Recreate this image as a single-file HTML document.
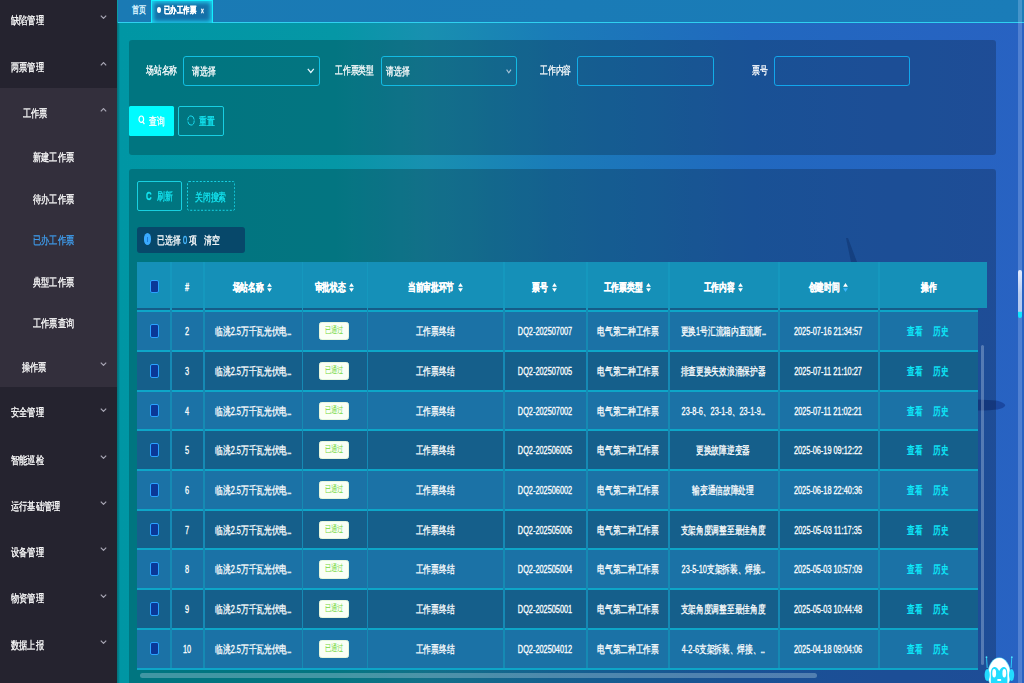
<!DOCTYPE html>
<html><head><meta charset="utf-8">
<style>
*{box-sizing:border-box;margin:0;padding:0}
html,body{width:1024px;height:683px;overflow:hidden;font-family:"Liberation Sans",sans-serif;color:#fff}
body{position:relative;background:#0a9ca4}
.a{position:absolute}
.t{position:absolute;white-space:nowrap;display:block;transform-origin:0 50%;transform:scaleX(.71);line-height:1;-webkit-text-stroke:.3px currentColor}
.c{position:absolute;white-space:nowrap;transform:translate(-50%,-50%) scaleX(.70);line-height:1;-webkit-text-stroke:.3px currentColor}
#side{left:0;top:0;width:117.2px;height:683px;background:#25232f}
#sub{left:0;top:88px;width:117.2px;height:299px;background:#332f3c}
.mi{font-size:11.4px;color:#fff;transform:scaleX(.745)}
.chev{position:absolute;width:5px;height:5px;border-right:1px solid #9a98a6;border-bottom:1px solid #9a98a6}
.dn{transform:rotate(45deg)}
.up{transform:rotate(-135deg)}
#main{left:117.5px;top:0;width:906.5px;height:683px;background:linear-gradient(90deg,#0096a4 0%,#0597a6 24%,#1890b0 34%,#1a7cb8 48%,#2168bf 70%,#2862c2 100%)}
#tabs{left:117.5px;top:0;width:906.5px;height:23px;background:linear-gradient(90deg,#1a7ab4,#1a7cb8);border-bottom:1.5px solid #2fd0f0}
.panel{position:absolute;background:rgba(0,0,0,.22);border-radius:3px}
.box{position:absolute;border:1px solid #17b4d8;border-radius:3px}
.lbl{font-size:10.5px;color:#fff}
.th{font-size:10.5px;font-weight:bold;color:#fff}
.td{font-size:10.5px;color:#fff}
.cb{position:absolute;width:9.2px;height:13.8px;background:#0a3898;border:1px solid #2aa2ff;border-radius:2px}
.row{position:absolute;left:137.3px;width:840.5px;border-top:2px solid #0ea6c8}
.vl{position:absolute;width:1.8px;background:#168ab4}
.tag{position:absolute;width:30px;height:18.4px;background:#fafff6;border:1px solid #e6f6dc;border-radius:2.5px}
.lnk{font-size:10.5px;color:#0cf0ff}
.sort{position:absolute;width:5px;height:9px}
</style></head><body>
<div id="main" class="a"></div>
<svg class="a" style="left:0;top:0" width="1024" height="683"><polygon points="846,238 848,238 857,262 851,262" fill="rgba(10,40,110,.32)"/><path d="M978 399.5 L996 400.5 C1003 402 1006 404.5 1005 406 C1003 409 996 410.5 978 410.5 Z" fill="rgba(10,40,120,.45)"/></svg>
<div id="tabs" class="a"></div>
<div class="a" style="left:117.2px;top:23px;width:3px;height:660px;background:linear-gradient(90deg,rgba(0,50,60,.45),rgba(0,50,60,0))"></div>
<div id="side" class="a"></div>
<div id="sub" class="a"></div>
<div class="t mi" style="left:11.3px;top:15.0px">缺陷管理</div>
<svg class="a" style="left:100.2px;top:15.2px" width="7" height="4" viewBox="0 0 6.6 4"><polyline points="0.6,0.6 3.3,3.3 6,0.6" fill="none" stroke="#a9a7b5" stroke-width="1.2"/></svg>
<div class="t mi" style="left:11.3px;top:61.5px">两票管理</div>
<svg class="a" style="left:100.2px;top:61.7px" width="7" height="4" viewBox="0 0 6.6 4"><polyline points="0.6,3.3 3.3,0.6 6,3.3" fill="none" stroke="#a9a7b5" stroke-width="1.2"/></svg>
<div class="t mi" style="left:22.7px;top:108.0px">工作票</div>
<svg class="a" style="left:100.2px;top:108.2px" width="7" height="4" viewBox="0 0 6.6 4"><polyline points="0.6,3.3 3.3,0.6 6,3.3" fill="none" stroke="#a9a7b5" stroke-width="1.2"/></svg>
<div class="t mi" style="left:33.1px;top:151.7px">新建工作票</div>
<div class="t mi" style="left:33.1px;top:193.6px">待办工作票</div>
<div class="t mi" style="left:33.1px;top:234.5px;color:#3fa0f2">已办工作票</div>
<div class="t mi" style="left:33.1px;top:276.5px">典型工作票</div>
<div class="t mi" style="left:33.1px;top:318.0px">工作票查询</div>
<div class="t mi" style="left:21.9px;top:361.5px">操作票</div>
<svg class="a" style="left:100.2px;top:361.7px" width="7" height="4" viewBox="0 0 6.6 4"><polyline points="0.6,0.6 3.3,3.3 6,0.6" fill="none" stroke="#a9a7b5" stroke-width="1.2"/></svg>
<div class="t mi" style="left:11.3px;top:407.4px">安全管理</div>
<svg class="a" style="left:100.2px;top:407.6px" width="7" height="4" viewBox="0 0 6.6 4"><polyline points="0.6,0.6 3.3,3.3 6,0.6" fill="none" stroke="#a9a7b5" stroke-width="1.2"/></svg>
<div class="t mi" style="left:11.3px;top:454.9px">智能巡检</div>
<svg class="a" style="left:100.2px;top:455.1px" width="7" height="4" viewBox="0 0 6.6 4"><polyline points="0.6,0.6 3.3,3.3 6,0.6" fill="none" stroke="#a9a7b5" stroke-width="1.2"/></svg>
<div class="t mi" style="left:11.3px;top:500.6px">运行基础管理</div>
<svg class="a" style="left:100.2px;top:500.8px" width="7" height="4" viewBox="0 0 6.6 4"><polyline points="0.6,0.6 3.3,3.3 6,0.6" fill="none" stroke="#a9a7b5" stroke-width="1.2"/></svg>
<div class="t mi" style="left:11.3px;top:546.7px">设备管理</div>
<svg class="a" style="left:100.2px;top:546.9px" width="7" height="4" viewBox="0 0 6.6 4"><polyline points="0.6,0.6 3.3,3.3 6,0.6" fill="none" stroke="#a9a7b5" stroke-width="1.2"/></svg>
<div class="t mi" style="left:11.3px;top:593.3px">物资管理</div>
<svg class="a" style="left:100.2px;top:593.5px" width="7" height="4" viewBox="0 0 6.6 4"><polyline points="0.6,0.6 3.3,3.3 6,0.6" fill="none" stroke="#a9a7b5" stroke-width="1.2"/></svg>
<div class="t mi" style="left:11.3px;top:639.9px">数据上报</div>
<svg class="a" style="left:100.2px;top:640.1px" width="7" height="4" viewBox="0 0 6.6 4"><polyline points="0.6,0.6 3.3,3.3 6,0.6" fill="none" stroke="#a9a7b5" stroke-width="1.2"/></svg>
<div class="c" style="left:138.5px;top:9.8px;font-size:9.8px;color:#dcf4ff;-webkit-text-stroke:.4px #dcf4ff">首页</div>
<div class="a" style="left:150.7px;top:0;width:62.2px;height:23px;border:1.5px solid #12f0ff;border-bottom:none;background:#1570a8;box-shadow:inset 0 0 4px 1.5px rgba(30,230,255,.85)"></div>
<div class="a" style="left:156.8px;top:7px;width:4px;height:6px;border-radius:50%;background:#fff"></div>
<div class="t" style="left:164.2px;top:4.9px;font-size:9.4px;font-weight:bold">已办工作票</div>
<div class="t" style="left:201px;top:6.8px;font-size:7px;color:#fff;font-weight:bold">x</div>
<div class="panel" style="left:129px;top:39.5px;width:866.5px;height:115.5px"></div>
<div class="t lbl" style="left:145.6px;top:65.3px">场站名称</div>
<div class="t lbl" style="left:335.2px;top:65.3px">工作票类型</div>
<div class="t lbl" style="left:540px;top:65.3px">工作内容</div>
<div class="t lbl" style="left:751.6px;top:65.3px">票号</div>
<div class="box" style="left:183px;top:56px;width:137px;height:30px;border-color:#12c0e2"></div>
<div class="t lbl" style="left:192px;top:65.8px">请选择</div>
<svg class="a" style="left:306.5px;top:68px" width="8" height="6" viewBox="0 0 8 6"><polyline points="0.8,0.8 3.8,4.5 6.8,0.8" fill="none" stroke="#e8f8ff" stroke-width="1.2"/></svg>
<div class="box" style="left:380.5px;top:56px;width:136.5px;height:30px;border-color:#12bbe4"></div>
<div class="t lbl" style="left:385.7px;top:65.8px">请选择</div>
<svg class="a" style="left:505.5px;top:68.5px" width="6" height="5" viewBox="0 0 6 5"><polyline points="0.6,0.6 2.8,3.8 5,0.6" fill="none" stroke="#a8c4d8" stroke-width="1.1"/></svg>
<div class="box" style="left:577px;top:56px;width:136.5px;height:30px;border-color:#12aee8"></div>
<div class="box" style="left:774.4px;top:56px;width:136.0px;height:30px;border-color:#12a6ec"></div>
<div class="a" style="left:128.6px;top:106px;width:45.3px;height:29.8px;background:#00fbff;border-radius:1.5px"></div>
<svg class="a" style="left:137.6px;top:115.2px" width="8" height="11" viewBox="0 0 8 11"><ellipse cx="3.3" cy="4.2" rx="2.3" ry="3.2" fill="none" stroke="#fff" stroke-width="1.2"/><line x1="4.8" y1="6.8" x2="6.4" y2="9.2" stroke="#fff" stroke-width="1.2"/></svg>
<div class="t" style="left:148.7px;top:115.8px;font-size:10.5px">查询</div>
<div class="box" style="left:178.4px;top:106px;width:45.4px;height:29.8px;border-color:#18cfe2;border-radius:2px"></div>
<svg class="a" style="left:187px;top:115px" width="8" height="11" viewBox="0 0 8 11"><ellipse cx="4" cy="5.5" rx="3.2" ry="4.6" fill="none" stroke="#1ad8ec" stroke-width="1" stroke-dasharray="11 1.2 11 1.2"/></svg>
<div class="t" style="left:198.5px;top:115.8px;font-size:10.5px;color:#14e6f2">重置</div>
<div class="panel" style="left:129px;top:169px;width:866.5px;height:520px"></div>
<div class="box" style="left:136.6px;top:181px;width:45.1px;height:29.7px;border-color:#18d0e0;border-radius:2px"></div>
<div class="t" style="left:146px;top:190.8px;font-size:11px;color:#14e6f2;font-weight:bold">C</div>
<div class="t" style="left:156.5px;top:190.5px;font-size:10.5px;color:#14e6f2">刷新</div>
<svg class="a" style="left:187.3px;top:181px" width="48.2" height="29.8" viewBox="0 0 48.2 29.8"><rect x="0.5" y="0.5" width="47.2" height="28.8" rx="1.5" fill="none" stroke="#16d2e4" stroke-width="1" stroke-dasharray="2 1.6"/></svg>
<div class="t" style="left:194.5px;top:191.5px;font-size:10.5px;color:#14e6f2">关闭搜索</div>
<div class="a" style="left:137px;top:227px;width:108.3px;height:25.7px;background:#07486a;border-radius:3px"></div>
<div class="a" style="left:143.9px;top:233.3px;width:7.6px;height:11.6px;border-radius:50%;background:#3aaaff"></div>
<div class="a" style="left:147.2px;top:236.5px;width:1px;height:5.5px;background:#1c7ad8"></div>
<div class="t" style="left:157px;top:234.5px;font-size:10.5px">已选择</div>
<div class="t" style="left:182.5px;top:234.5px;font-size:10.5px;color:#4ab8ff;-webkit-text-stroke:.5px #4ab8ff">0</div>
<div class="t" style="left:189.3px;top:234.5px;font-size:10.5px">项</div>
<div class="t" style="left:203.5px;top:234.5px;font-size:10.5px">清空</div>
<div class="a" style="left:137.3px;top:262.4px;width:849.7px;height:45.8px;background:#1590b8"></div>
<div class="a" style="left:137.3px;top:308.2px;width:840.5px;height:2.4px;background:#155c88"></div>
<div class="vl" style="left:170.1px;top:262.4px;height:48px;background:#1598be"></div>
<div class="vl" style="left:202.89999999999998px;top:262.4px;height:48px;background:#1598be"></div>
<div class="vl" style="left:301.5px;top:262.4px;height:48px;background:#1598be"></div>
<div class="vl" style="left:366.7px;top:262.4px;height:48px;background:#1598be"></div>
<div class="vl" style="left:503.0px;top:262.4px;height:48px;background:#1598be"></div>
<div class="vl" style="left:586.0px;top:262.4px;height:48px;background:#1598be"></div>
<div class="vl" style="left:668.3000000000001px;top:262.4px;height:48px;background:#1598be"></div>
<div class="vl" style="left:777.9000000000001px;top:262.4px;height:48px;background:#1598be"></div>
<div class="vl" style="left:877.9000000000001px;top:262.4px;height:48px;background:#1598be"></div>
<div class="cb" style="left:150.1px;top:279.5px"></div>
<div class="c th" style="left:186.8px;top:286.5px;transform:translate(-50%,-50%) scaleX(.70)">#</div>
<div class="c th" style="left:247.9px;top:286.5px;transform:translate(-50%,-50%) scaleX(.70)">场站名称</div>
<svg class="sort" style="left:267.3px;top:282.8px" viewBox="0 0 5 9"><polygon points="2.5,0 4.9,3.7 0.1,3.7" fill="#fff"/><polygon points="0.1,5.2 4.9,5.2 2.5,8.9" fill="#fff"/></svg>
<div class="c th" style="left:329.8px;top:286.5px;transform:translate(-50%,-50%) scaleX(.70)">审批状态</div>
<svg class="sort" style="left:349.2px;top:282.8px" viewBox="0 0 5 9"><polygon points="2.5,0 4.9,3.7 0.1,3.7" fill="#fff"/><polygon points="0.1,5.2 4.9,5.2 2.5,8.9" fill="#fff"/></svg>
<div class="c th" style="left:430.5px;top:286.5px;transform:translate(-50%,-50%) scaleX(.70)">当前审批环节</div>
<svg class="sort" style="left:457.6px;top:282.8px" viewBox="0 0 5 9"><polygon points="2.5,0 4.9,3.7 0.1,3.7" fill="#fff"/><polygon points="0.1,5.2 4.9,5.2 2.5,8.9" fill="#fff"/></svg>
<div class="c th" style="left:540.2px;top:286.5px;transform:translate(-50%,-50%) scaleX(.70)">票号</div>
<svg class="sort" style="left:551.9px;top:282.8px" viewBox="0 0 5 9"><polygon points="2.5,0 4.9,3.7 0.1,3.7" fill="#fff"/><polygon points="0.1,5.2 4.9,5.2 2.5,8.9" fill="#fff"/></svg>
<div class="c th" style="left:622.9px;top:286.5px;transform:translate(-50%,-50%) scaleX(.70)">工作票类型</div>
<svg class="sort" style="left:646.1px;top:282.8px" viewBox="0 0 5 9"><polygon points="2.5,0 4.9,3.7 0.1,3.7" fill="#fff"/><polygon points="0.1,5.2 4.9,5.2 2.5,8.9" fill="#fff"/></svg>
<div class="c th" style="left:718.8px;top:286.5px;transform:translate(-50%,-50%) scaleX(.70)">工作内容</div>
<svg class="sort" style="left:738.2px;top:282.8px" viewBox="0 0 5 9"><polygon points="2.5,0 4.9,3.7 0.1,3.7" fill="#fff"/><polygon points="0.1,5.2 4.9,5.2 2.5,8.9" fill="#fff"/></svg>
<div class="c th" style="left:823.6px;top:286.5px;transform:translate(-50%,-50%) scaleX(.70)">创建时间</div>
<svg class="sort" style="left:843.0px;top:282.8px" viewBox="0 0 5 9"><polygon points="2.5,0 4.9,3.7 0.1,3.7" fill="#fff"/><polygon points="0.1,5.2 4.9,5.2 2.5,8.9" fill="#3cb6ff"/></svg>
<div class="c th" style="left:928.5px;top:286.5px;transform:translate(-50%,-50%) scaleX(.70)">操作</div>
<div class="row" style="top:310.40px;height:41.18px;background:#1b72a6"></div>
<div class="vl" style="left:170.1px;top:310.40px;height:41.18px"></div>
<div class="vl" style="left:202.89999999999998px;top:310.40px;height:41.18px"></div>
<div class="vl" style="left:301.5px;top:310.40px;height:41.18px"></div>
<div class="vl" style="left:366.7px;top:310.40px;height:41.18px"></div>
<div class="vl" style="left:503.0px;top:310.40px;height:41.18px"></div>
<div class="vl" style="left:586.0px;top:310.40px;height:41.18px"></div>
<div class="vl" style="left:668.3000000000001px;top:310.40px;height:41.18px"></div>
<div class="vl" style="left:777.9000000000001px;top:310.40px;height:41.18px"></div>
<div class="vl" style="left:877.9000000000001px;top:310.40px;height:41.18px"></div>
<div class="cb" style="left:150.1px;top:324.2px"></div>
<div class="c td" style="left:186.8px;top:331.1px">2</div>
<div class="c td" style="left:252.5px;top:331.1px">临洮2.5万千瓦光伏电<span style="letter-spacing:-1.2px">...</span></div>
<div class="tag" style="left:319.4px;top:322.1px"></div>
<div class="c" style="left:334.4px;top:331.1px;font-size:9.2px;color:#72d83a;-webkit-text-stroke:0;transform:translate(-50%,-50%) scaleX(.70)">已通过</div>
<div class="c td" style="left:435.1px;top:331.1px">工作票终结</div>
<div class="c td" style="left:544.8px;top:331.1px">DQ2-202507007</div>
<div class="c td" style="left:627.5px;top:331.1px">电气第二种工作票</div>
<div class="c td" style="left:723.4px;top:331.1px">更换1号汇流箱内直流断<span style="letter-spacing:-1.2px">...</span></div>
<div class="c td" style="left:828.2px;top:331.1px">2025-07-16 21:34:57</div>
<div class="c lnk" style="left:914.5px;top:331.1px">查看</div>
<div class="c lnk" style="left:941.0px;top:331.1px">历史</div>
<div class="row" style="top:350.08px;height:41.18px;background:#155f8b"></div>
<div class="vl" style="left:170.1px;top:350.08px;height:41.18px"></div>
<div class="vl" style="left:202.89999999999998px;top:350.08px;height:41.18px"></div>
<div class="vl" style="left:301.5px;top:350.08px;height:41.18px"></div>
<div class="vl" style="left:366.7px;top:350.08px;height:41.18px"></div>
<div class="vl" style="left:503.0px;top:350.08px;height:41.18px"></div>
<div class="vl" style="left:586.0px;top:350.08px;height:41.18px"></div>
<div class="vl" style="left:668.3000000000001px;top:350.08px;height:41.18px"></div>
<div class="vl" style="left:777.9000000000001px;top:350.08px;height:41.18px"></div>
<div class="vl" style="left:877.9000000000001px;top:350.08px;height:41.18px"></div>
<div class="cb" style="left:150.1px;top:363.9px"></div>
<div class="c td" style="left:186.8px;top:370.8px">3</div>
<div class="c td" style="left:252.5px;top:370.8px">临洮2.5万千瓦光伏电<span style="letter-spacing:-1.2px">...</span></div>
<div class="tag" style="left:319.4px;top:361.8px"></div>
<div class="c" style="left:334.4px;top:370.8px;font-size:9.2px;color:#72d83a;-webkit-text-stroke:0;transform:translate(-50%,-50%) scaleX(.70)">已通过</div>
<div class="c td" style="left:435.1px;top:370.8px">工作票终结</div>
<div class="c td" style="left:544.8px;top:370.8px">DQ2-202507005</div>
<div class="c td" style="left:627.5px;top:370.8px">电气第二种工作票</div>
<div class="c td" style="left:723.4px;top:370.8px">排查更换失效浪涌保护器</div>
<div class="c td" style="left:828.2px;top:370.8px">2025-07-11 21:10:27</div>
<div class="c lnk" style="left:914.5px;top:370.8px">查看</div>
<div class="c lnk" style="left:941.0px;top:370.8px">历史</div>
<div class="row" style="top:389.76px;height:41.18px;background:#1b72a6"></div>
<div class="vl" style="left:170.1px;top:389.76px;height:41.18px"></div>
<div class="vl" style="left:202.89999999999998px;top:389.76px;height:41.18px"></div>
<div class="vl" style="left:301.5px;top:389.76px;height:41.18px"></div>
<div class="vl" style="left:366.7px;top:389.76px;height:41.18px"></div>
<div class="vl" style="left:503.0px;top:389.76px;height:41.18px"></div>
<div class="vl" style="left:586.0px;top:389.76px;height:41.18px"></div>
<div class="vl" style="left:668.3000000000001px;top:389.76px;height:41.18px"></div>
<div class="vl" style="left:777.9000000000001px;top:389.76px;height:41.18px"></div>
<div class="vl" style="left:877.9000000000001px;top:389.76px;height:41.18px"></div>
<div class="cb" style="left:150.1px;top:403.6px"></div>
<div class="c td" style="left:186.8px;top:410.5px">4</div>
<div class="c td" style="left:252.5px;top:410.5px">临洮2.5万千瓦光伏电<span style="letter-spacing:-1.2px">...</span></div>
<div class="tag" style="left:319.4px;top:401.5px"></div>
<div class="c" style="left:334.4px;top:410.5px;font-size:9.2px;color:#72d83a;-webkit-text-stroke:0;transform:translate(-50%,-50%) scaleX(.70)">已通过</div>
<div class="c td" style="left:435.1px;top:410.5px">工作票终结</div>
<div class="c td" style="left:544.8px;top:410.5px">DQ2-202507002</div>
<div class="c td" style="left:627.5px;top:410.5px">电气第二种工作票</div>
<div class="c td" style="left:723.4px;top:410.5px">23-8-6、23-1-8、23-1-9<span style="letter-spacing:-1.2px">...</span></div>
<div class="c td" style="left:828.2px;top:410.5px">2025-07-11 21:02:21</div>
<div class="c lnk" style="left:914.5px;top:410.5px">查看</div>
<div class="c lnk" style="left:941.0px;top:410.5px">历史</div>
<div class="row" style="top:429.44px;height:41.18px;background:#155f8b"></div>
<div class="vl" style="left:170.1px;top:429.44px;height:41.18px"></div>
<div class="vl" style="left:202.89999999999998px;top:429.44px;height:41.18px"></div>
<div class="vl" style="left:301.5px;top:429.44px;height:41.18px"></div>
<div class="vl" style="left:366.7px;top:429.44px;height:41.18px"></div>
<div class="vl" style="left:503.0px;top:429.44px;height:41.18px"></div>
<div class="vl" style="left:586.0px;top:429.44px;height:41.18px"></div>
<div class="vl" style="left:668.3000000000001px;top:429.44px;height:41.18px"></div>
<div class="vl" style="left:777.9000000000001px;top:429.44px;height:41.18px"></div>
<div class="vl" style="left:877.9000000000001px;top:429.44px;height:41.18px"></div>
<div class="cb" style="left:150.1px;top:443.2px"></div>
<div class="c td" style="left:186.8px;top:450.1px">5</div>
<div class="c td" style="left:252.5px;top:450.1px">临洮2.5万千瓦光伏电<span style="letter-spacing:-1.2px">...</span></div>
<div class="tag" style="left:319.4px;top:441.1px"></div>
<div class="c" style="left:334.4px;top:450.1px;font-size:9.2px;color:#72d83a;-webkit-text-stroke:0;transform:translate(-50%,-50%) scaleX(.70)">已通过</div>
<div class="c td" style="left:435.1px;top:450.1px">工作票终结</div>
<div class="c td" style="left:544.8px;top:450.1px">DQ2-202506005</div>
<div class="c td" style="left:627.5px;top:450.1px">电气第二种工作票</div>
<div class="c td" style="left:723.4px;top:450.1px">更换故障逆变器</div>
<div class="c td" style="left:828.2px;top:450.1px">2025-06-19 09:12:22</div>
<div class="c lnk" style="left:914.5px;top:450.1px">查看</div>
<div class="c lnk" style="left:941.0px;top:450.1px">历史</div>
<div class="row" style="top:469.12px;height:41.18px;background:#1b72a6"></div>
<div class="vl" style="left:170.1px;top:469.12px;height:41.18px"></div>
<div class="vl" style="left:202.89999999999998px;top:469.12px;height:41.18px"></div>
<div class="vl" style="left:301.5px;top:469.12px;height:41.18px"></div>
<div class="vl" style="left:366.7px;top:469.12px;height:41.18px"></div>
<div class="vl" style="left:503.0px;top:469.12px;height:41.18px"></div>
<div class="vl" style="left:586.0px;top:469.12px;height:41.18px"></div>
<div class="vl" style="left:668.3000000000001px;top:469.12px;height:41.18px"></div>
<div class="vl" style="left:777.9000000000001px;top:469.12px;height:41.18px"></div>
<div class="vl" style="left:877.9000000000001px;top:469.12px;height:41.18px"></div>
<div class="cb" style="left:150.1px;top:482.9px"></div>
<div class="c td" style="left:186.8px;top:489.8px">6</div>
<div class="c td" style="left:252.5px;top:489.8px">临洮2.5万千瓦光伏电<span style="letter-spacing:-1.2px">...</span></div>
<div class="tag" style="left:319.4px;top:480.8px"></div>
<div class="c" style="left:334.4px;top:489.8px;font-size:9.2px;color:#72d83a;-webkit-text-stroke:0;transform:translate(-50%,-50%) scaleX(.70)">已通过</div>
<div class="c td" style="left:435.1px;top:489.8px">工作票终结</div>
<div class="c td" style="left:544.8px;top:489.8px">DQ2-202506002</div>
<div class="c td" style="left:627.5px;top:489.8px">电气第二种工作票</div>
<div class="c td" style="left:723.4px;top:489.8px">输变通信故障处理</div>
<div class="c td" style="left:828.2px;top:489.8px">2025-06-18 22:40:36</div>
<div class="c lnk" style="left:914.5px;top:489.8px">查看</div>
<div class="c lnk" style="left:941.0px;top:489.8px">历史</div>
<div class="row" style="top:508.80px;height:41.18px;background:#155f8b"></div>
<div class="vl" style="left:170.1px;top:508.80px;height:41.18px"></div>
<div class="vl" style="left:202.89999999999998px;top:508.80px;height:41.18px"></div>
<div class="vl" style="left:301.5px;top:508.80px;height:41.18px"></div>
<div class="vl" style="left:366.7px;top:508.80px;height:41.18px"></div>
<div class="vl" style="left:503.0px;top:508.80px;height:41.18px"></div>
<div class="vl" style="left:586.0px;top:508.80px;height:41.18px"></div>
<div class="vl" style="left:668.3000000000001px;top:508.80px;height:41.18px"></div>
<div class="vl" style="left:777.9000000000001px;top:508.80px;height:41.18px"></div>
<div class="vl" style="left:877.9000000000001px;top:508.80px;height:41.18px"></div>
<div class="cb" style="left:150.1px;top:522.6px"></div>
<div class="c td" style="left:186.8px;top:529.5px">7</div>
<div class="c td" style="left:252.5px;top:529.5px">临洮2.5万千瓦光伏电<span style="letter-spacing:-1.2px">...</span></div>
<div class="tag" style="left:319.4px;top:520.5px"></div>
<div class="c" style="left:334.4px;top:529.5px;font-size:9.2px;color:#72d83a;-webkit-text-stroke:0;transform:translate(-50%,-50%) scaleX(.70)">已通过</div>
<div class="c td" style="left:435.1px;top:529.5px">工作票终结</div>
<div class="c td" style="left:544.8px;top:529.5px">DQ2-202505006</div>
<div class="c td" style="left:627.5px;top:529.5px">电气第二种工作票</div>
<div class="c td" style="left:723.4px;top:529.5px">支架角度调整至最佳角度</div>
<div class="c td" style="left:828.2px;top:529.5px">2025-05-03 11:17:35</div>
<div class="c lnk" style="left:914.5px;top:529.5px">查看</div>
<div class="c lnk" style="left:941.0px;top:529.5px">历史</div>
<div class="row" style="top:548.48px;height:41.18px;background:#1b72a6"></div>
<div class="vl" style="left:170.1px;top:548.48px;height:41.18px"></div>
<div class="vl" style="left:202.89999999999998px;top:548.48px;height:41.18px"></div>
<div class="vl" style="left:301.5px;top:548.48px;height:41.18px"></div>
<div class="vl" style="left:366.7px;top:548.48px;height:41.18px"></div>
<div class="vl" style="left:503.0px;top:548.48px;height:41.18px"></div>
<div class="vl" style="left:586.0px;top:548.48px;height:41.18px"></div>
<div class="vl" style="left:668.3000000000001px;top:548.48px;height:41.18px"></div>
<div class="vl" style="left:777.9000000000001px;top:548.48px;height:41.18px"></div>
<div class="vl" style="left:877.9000000000001px;top:548.48px;height:41.18px"></div>
<div class="cb" style="left:150.1px;top:562.3px"></div>
<div class="c td" style="left:186.8px;top:569.2px">8</div>
<div class="c td" style="left:252.5px;top:569.2px">临洮2.5万千瓦光伏电<span style="letter-spacing:-1.2px">...</span></div>
<div class="tag" style="left:319.4px;top:560.2px"></div>
<div class="c" style="left:334.4px;top:569.2px;font-size:9.2px;color:#72d83a;-webkit-text-stroke:0;transform:translate(-50%,-50%) scaleX(.70)">已通过</div>
<div class="c td" style="left:435.1px;top:569.2px">工作票终结</div>
<div class="c td" style="left:544.8px;top:569.2px">DQ2-202505004</div>
<div class="c td" style="left:627.5px;top:569.2px">电气第二种工作票</div>
<div class="c td" style="left:723.4px;top:569.2px">23-5-10支架拆装、焊接<span style="letter-spacing:-1.2px">...</span></div>
<div class="c td" style="left:828.2px;top:569.2px">2025-05-03 10:57:09</div>
<div class="c lnk" style="left:914.5px;top:569.2px">查看</div>
<div class="c lnk" style="left:941.0px;top:569.2px">历史</div>
<div class="row" style="top:588.16px;height:41.18px;background:#155f8b"></div>
<div class="vl" style="left:170.1px;top:588.16px;height:41.18px"></div>
<div class="vl" style="left:202.89999999999998px;top:588.16px;height:41.18px"></div>
<div class="vl" style="left:301.5px;top:588.16px;height:41.18px"></div>
<div class="vl" style="left:366.7px;top:588.16px;height:41.18px"></div>
<div class="vl" style="left:503.0px;top:588.16px;height:41.18px"></div>
<div class="vl" style="left:586.0px;top:588.16px;height:41.18px"></div>
<div class="vl" style="left:668.3000000000001px;top:588.16px;height:41.18px"></div>
<div class="vl" style="left:777.9000000000001px;top:588.16px;height:41.18px"></div>
<div class="vl" style="left:877.9000000000001px;top:588.16px;height:41.18px"></div>
<div class="cb" style="left:150.1px;top:602.0px"></div>
<div class="c td" style="left:186.8px;top:608.9px">9</div>
<div class="c td" style="left:252.5px;top:608.9px">临洮2.5万千瓦光伏电<span style="letter-spacing:-1.2px">...</span></div>
<div class="tag" style="left:319.4px;top:599.9px"></div>
<div class="c" style="left:334.4px;top:608.9px;font-size:9.2px;color:#72d83a;-webkit-text-stroke:0;transform:translate(-50%,-50%) scaleX(.70)">已通过</div>
<div class="c td" style="left:435.1px;top:608.9px">工作票终结</div>
<div class="c td" style="left:544.8px;top:608.9px">DQ2-202505001</div>
<div class="c td" style="left:627.5px;top:608.9px">电气第二种工作票</div>
<div class="c td" style="left:723.4px;top:608.9px">支架角度调整至最佳角度</div>
<div class="c td" style="left:828.2px;top:608.9px">2025-05-03 10:44:48</div>
<div class="c lnk" style="left:914.5px;top:608.9px">查看</div>
<div class="c lnk" style="left:941.0px;top:608.9px">历史</div>
<div class="row" style="top:627.84px;height:41.18px;background:#1b72a6"></div>
<div class="vl" style="left:170.1px;top:627.84px;height:41.18px"></div>
<div class="vl" style="left:202.89999999999998px;top:627.84px;height:41.18px"></div>
<div class="vl" style="left:301.5px;top:627.84px;height:41.18px"></div>
<div class="vl" style="left:366.7px;top:627.84px;height:41.18px"></div>
<div class="vl" style="left:503.0px;top:627.84px;height:41.18px"></div>
<div class="vl" style="left:586.0px;top:627.84px;height:41.18px"></div>
<div class="vl" style="left:668.3000000000001px;top:627.84px;height:41.18px"></div>
<div class="vl" style="left:777.9000000000001px;top:627.84px;height:41.18px"></div>
<div class="vl" style="left:877.9000000000001px;top:627.84px;height:41.18px"></div>
<div class="cb" style="left:150.1px;top:641.6px"></div>
<div class="c td" style="left:186.8px;top:648.5px">10</div>
<div class="c td" style="left:252.5px;top:648.5px">临洮2.5万千瓦光伏电<span style="letter-spacing:-1.2px">...</span></div>
<div class="tag" style="left:319.4px;top:639.5px"></div>
<div class="c" style="left:334.4px;top:648.5px;font-size:9.2px;color:#72d83a;-webkit-text-stroke:0;transform:translate(-50%,-50%) scaleX(.70)">已通过</div>
<div class="c td" style="left:435.1px;top:648.5px">工作票终结</div>
<div class="c td" style="left:544.8px;top:648.5px">DQ2-202504012</div>
<div class="c td" style="left:627.5px;top:648.5px">电气第二种工作票</div>
<div class="c td" style="left:723.4px;top:648.5px">4-2-6支架拆装、焊接、<span style="letter-spacing:-1.2px">...</span></div>
<div class="c td" style="left:828.2px;top:648.5px">2025-04-18 09:04:06</div>
<div class="c lnk" style="left:914.5px;top:648.5px">查看</div>
<div class="c lnk" style="left:941.0px;top:648.5px">历史</div>
<div class="a" style="left:137.3px;top:667.52px;width:840.5px;height:2px;background:#0ea6c8"></div>
<div class="a" style="left:981px;top:344.6px;width:3px;height:320px;border-radius:2px;background:rgba(190,210,235,.35)"></div>
<div class="a" style="left:140px;top:673px;width:677px;height:5px;border-radius:3px;background:rgba(170,205,220,.38)"></div>
<div class="a" style="left:1017.5px;top:0;width:4px;height:683px;background:rgba(200,220,255,.25)"></div>
<div class="a" style="left:1018.2px;top:270px;width:4px;height:47.5px;border-radius:2px;background:linear-gradient(#e4ecff 0%,#b8ccf0 50%,#b4c8f0 86%,#10e6ff 88%,#10e6ff 100%)"></div>
<svg class="a" style="left:982px;top:652px" width="42" height="31" viewBox="0 0 42 31">
<defs><filter id="gl" x="-30%" y="-30%" width="160%" height="160%"><feGaussianBlur stdDeviation="0.6"/></filter></defs>
<line x1="4.5" y1="5" x2="5.2" y2="16" stroke="#2ad6ff" stroke-width="0.9"/>
<line x1="29.8" y1="5" x2="29.1" y2="16" stroke="#2ad6ff" stroke-width="0.9"/>
<circle cx="4.5" cy="5.2" r="0.9" fill="#4ae0ff"/>
<circle cx="29.8" cy="5.2" r="0.9" fill="#4ae0ff"/>
<ellipse cx="17.2" cy="22.5" rx="11.6" ry="17" fill="#6ae8ff" filter="url(#gl)"/>
<ellipse cx="17.2" cy="22.5" rx="10.8" ry="16.4" fill="#fff"/>
<ellipse cx="5.2" cy="23" rx="2.6" ry="6" fill="#22dcff"/>
<ellipse cx="29.6" cy="23" rx="2.6" ry="6" fill="#22dcff"/>
<path d="M8.8 22 C8.8 16 11 15 13 15 C15 15 16.3 17.5 17.2 19 C18.1 17.5 19.4 15 21.4 15 C23.6 15 25.4 16 25.4 22 L25.4 31 L8.8 31 Z" fill="#22ddff"/>
<ellipse cx="12.2" cy="21.2" rx="1.9" ry="4.2" fill="#fff"/>
<ellipse cx="22.3" cy="21.2" rx="1.9" ry="4.2" fill="#fff"/>
<rect x="15.2" y="27" width="4" height="2" rx="0.8" fill="#fff"/>
</svg>
</body></html>
